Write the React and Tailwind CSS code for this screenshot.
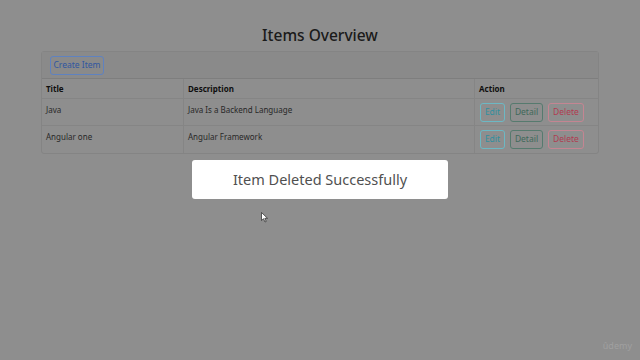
import React from "react";

const rows = [
  { title: "Java", desc: "Java Is a Backend Language" },
  { title: "Angular one", desc: "Angular Framework" },
];

export default function App() {
  return (
    <div
      className="relative w-[640px] h-[360px] overflow-hidden bg-[#8e8e8e] pt-[24px]"
      style={{ fontFamily: '"Noto Sans", "Open Sans", sans-serif' }}
    >
      <h1 className="text-center text-[15.5px] leading-[22px] font-medium text-[#1a1a1a]">
        Items Overview
      </h1>
      <div className="mx-[41px] mt-[5px] border border-solid border-[#848484] rounded-[3px]">
        <div className="h-[27px] bg-[#8a8a8a] border-b border-solid border-[#7e7e7e] px-[8px] flex items-center">
          <div className="flex items-center justify-center w-[54px] h-[19px] rounded-[3px] border border-solid border-[#5f82c0] text-[8.5px] leading-none text-[#3056a0]">
            Create Item
          </div>
        </div>
        <div className="grid grid-cols-[142px_291px_1fr] text-[8px]">
          <div className="h-[20px] px-[4px] flex items-center font-bold text-[#0e0e0e] border-r border-b border-solid border-[#858585]">Title</div>
          <div className="h-[20px] px-[4px] flex items-center font-bold text-[#0e0e0e] border-r border-b border-solid border-[#858585]">Description</div>
          <div className="h-[20px] px-[4px] flex items-center font-bold text-[#0e0e0e] border-b border-solid border-[#858585]">Action</div>
          {rows.map((r, i) => (
            <React.Fragment key={i}>
              <div className={i === 0 ? "h-[27px] px-[4px] pt-[5px] text-[#282828] border-r border-b border-solid border-[#858585]" : "h-[27px] px-[4px] pt-[5px] text-[#282828] border-r border-solid border-[#858585]"}>{r.title}</div>
              <div className={i === 0 ? "h-[27px] px-[4px] pt-[5px] text-[#282828] border-r border-b border-solid border-[#858585]" : "h-[27px] px-[4px] pt-[5px] text-[#282828] border-r border-solid border-[#858585]"}>{r.desc}</div>
              <div className={i === 0 ? "h-[27px] px-[5px] flex items-center gap-[5px] border-b border-solid border-[#858585]" : "h-[27px] px-[5px] flex items-center gap-[5px]"}>
                <div className="flex items-center justify-center w-[25px] h-[19px] rounded-[3px] border border-solid border-[#6cb8c4] text-[8.5px] leading-none text-[#318f9e]">Edit</div>
                <div className="flex items-center justify-center w-[33px] h-[19px] rounded-[3px] border border-solid border-[#567a6e] text-[8.5px] leading-none text-[#40685a]">Detail</div>
                <div className="flex items-center justify-center w-[36px] h-[19px] rounded-[3px] border border-solid border-[#c48592] text-[8.5px] leading-none text-[#b03c50]">Delete</div>
              </div>
            </React.Fragment>
          ))}
        </div>
      </div>
      <div className="mx-auto mt-[6px] w-[256px] h-[39px] bg-white rounded-[3px] flex items-center justify-center text-[14.5px] text-[#505050]">
        Item Deleted Successfully
      </div>
      <svg className="absolute left-[261px] top-[212px]" width="8" height="11" viewBox="0 0 8 11">
        <path d="M0.5 0.5 L0.5 8.5 L2.5 6.7 L4 10 L5.2 9.4 L3.8 6.3 L6.5 6.3 Z" fill="#ffffff" stroke="#222" strokeWidth="0.7" />
      </svg>
      <div className="absolute right-[8px] bottom-[8px] text-[9px] text-[#a0a0a0]">ûdemy</div>
    </div>
  );
}
